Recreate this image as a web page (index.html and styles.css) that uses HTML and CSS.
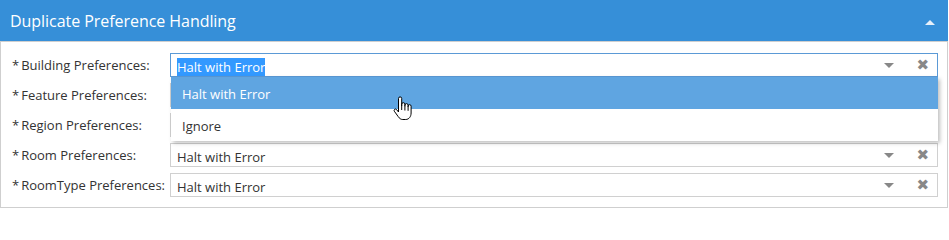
FILE: index.html
```html
<!DOCTYPE html>
<html>
<head>
<meta charset="utf-8">
<link rel="stylesheet" href="styles.css">
</head>
<body>
<div class="panel">
  <div class="panel-header">
    <span class="title">Duplicate Preference Handling</span>
    <span class="collapse"></span>
  </div>
  <div class="panel-body">
    <div class="row">
      <label class="lbl"><span class="req">*</span>Building Preferences:</label>
      <div class="select focus">
        <span class="value"><span class="sel">Halt with Error</span></span>
        <span class="arrow"></span>
        <span class="clear">&#x2716;</span>
        <ul class="dropdown">
          <li class="opt active">Halt with Error</li>
          <li class="opt">Ignore</li>
        </ul>
        <svg class="cursor" width="19" height="25" viewBox="0 0 19 25">
          <path d="M5.5 2.5a1.6 1.6 0 0 1 3.2 0V10V8.3a1.6 1.6 0 0 1 3.2 0V10.5V9.2a1.6 1.6 0 0 1 3.2 0V11V10.2a1.5 1.5 0 0 1 3 0V17c0 3.6-2.2 6.5-5.4 6.5H9.8c-2 0-3.3-1-4.6-2.9L1.3 15.2a1.4 1.4 0 0 1 2.2-1.7L5.5 16Z" fill="#fff" stroke="#000" stroke-width="1" stroke-linejoin="round"/>
          <path d="M8.7 10v4M11.9 10.5v4M15.1 11v3.8" stroke="#000" stroke-width="1"/>
        </svg>
      </div>
    </div>
    <div class="row">
      <label class="lbl"><span class="req">*</span>Feature Preferences:</label>
      <div class="select">
        <span class="value covered">Halt with Error</span>
        <span class="arrow"></span>
        <span class="clear">&#x2716;</span>
      </div>
    </div>
    <div class="row">
      <label class="lbl"><span class="req">*</span>Region Preferences:</label>
      <div class="select">
        <span class="value covered">Halt with Error</span>
        <span class="arrow"></span>
        <span class="clear">&#x2716;</span>
      </div>
    </div>
    <div class="row">
      <label class="lbl"><span class="req">*</span>Room Preferences:</label>
      <div class="select">
        <span class="value">Halt with Error</span>
        <span class="arrow"></span>
        <span class="clear">&#x2716;</span>
      </div>
    </div>
    <div class="row">
      <label class="lbl"><span class="req">*</span>RoomType Preferences:</label>
      <div class="select">
        <span class="value">Halt with Error</span>
        <span class="arrow"></span>
        <span class="clear">&#x2716;</span>
      </div>
    </div>
  </div>
</div>
</body>
</html>
```
FILE: styles.css
```css
* { box-sizing: border-box; }
html, body { margin: 0; padding: 0; background: #fff; }
body { font-family: "Open Sans", "Liberation Sans", sans-serif; color: #333; }

.panel {
  width: 948px;
  height: 208px;
  border: 1px solid #cfcfcf;
  border-top: none;
}
.panel-header {
  height: 42px;
  margin: 0 -1px;
  background: #368fd8;
  color: #fff;
  display: flex;
  align-items: center;
  justify-content: space-between;
  padding: 0 13px 0 10px;
  border-bottom: 1px solid #cfcfcf;
}
.title { font-size: 16px; letter-spacing: -0.05px; margin-top: 0; }
.collapse {
  width: 0; height: 0;
  border-left: 5px solid transparent;
  border-right: 5px solid transparent;
  border-bottom: 5px solid #e6f0fa;
  margin-top: 3px;
}
.panel-body {
  padding: 11px 9px 0 11px;
  display: flex;
  flex-direction: column;
  gap: 6px;
}
.row {
  display: flex;
  align-items: center;
  height: 24px;
}
.lbl {
  width: 158px;
  font-size: 13px;
  color: #333;
  margin-top: -1px;
}
.req { margin-right: 2px; }
.select {
  position: relative;
  flex: 1;
  height: 24px;
  border: 1px solid #d0d0d0;
  display: flex;
  align-items: center;
  padding: 0 0 0 6px;
  font-size: 13px;
  color: #333;
}
.select.focus { border-color: #5b9ad6; }
.value { flex: 1; margin-top: 3px; }
.covered { visibility: hidden; }
.sel { background: #3399ff; color: #fff; }
.arrow {
  width: 0; height: 0;
  border-left: 5px solid transparent;
  border-right: 5px solid transparent;
  border-top: 5px solid #888;
  margin-right: 22px;
  margin-top: 1px;
}
.clear {
  color: #888;
  font-size: 15px;
  margin-right: 8px;
  font-family: "DejaVu Sans", sans-serif;
  line-height: 1;
}
.dropdown {
  position: absolute;
  left: 0;
  right: -1px;
  top: 23px;
  margin: 0;
  padding: 0;
  list-style: none;
  background: #fff;
  box-shadow: 2px 2px 4px rgba(0,0,0,0.25);
  z-index: 5;
}
.opt {
  height: 32px;
  line-height: 34px;
  padding-left: 11px;
  font-size: 13px;
  color: #333;
}
.opt.active { background: #5fa5e1; color: #fff; }
.cursor {
  position: absolute;
  left: 222px;
  top: 42px;
  z-index: 6;
}
```
